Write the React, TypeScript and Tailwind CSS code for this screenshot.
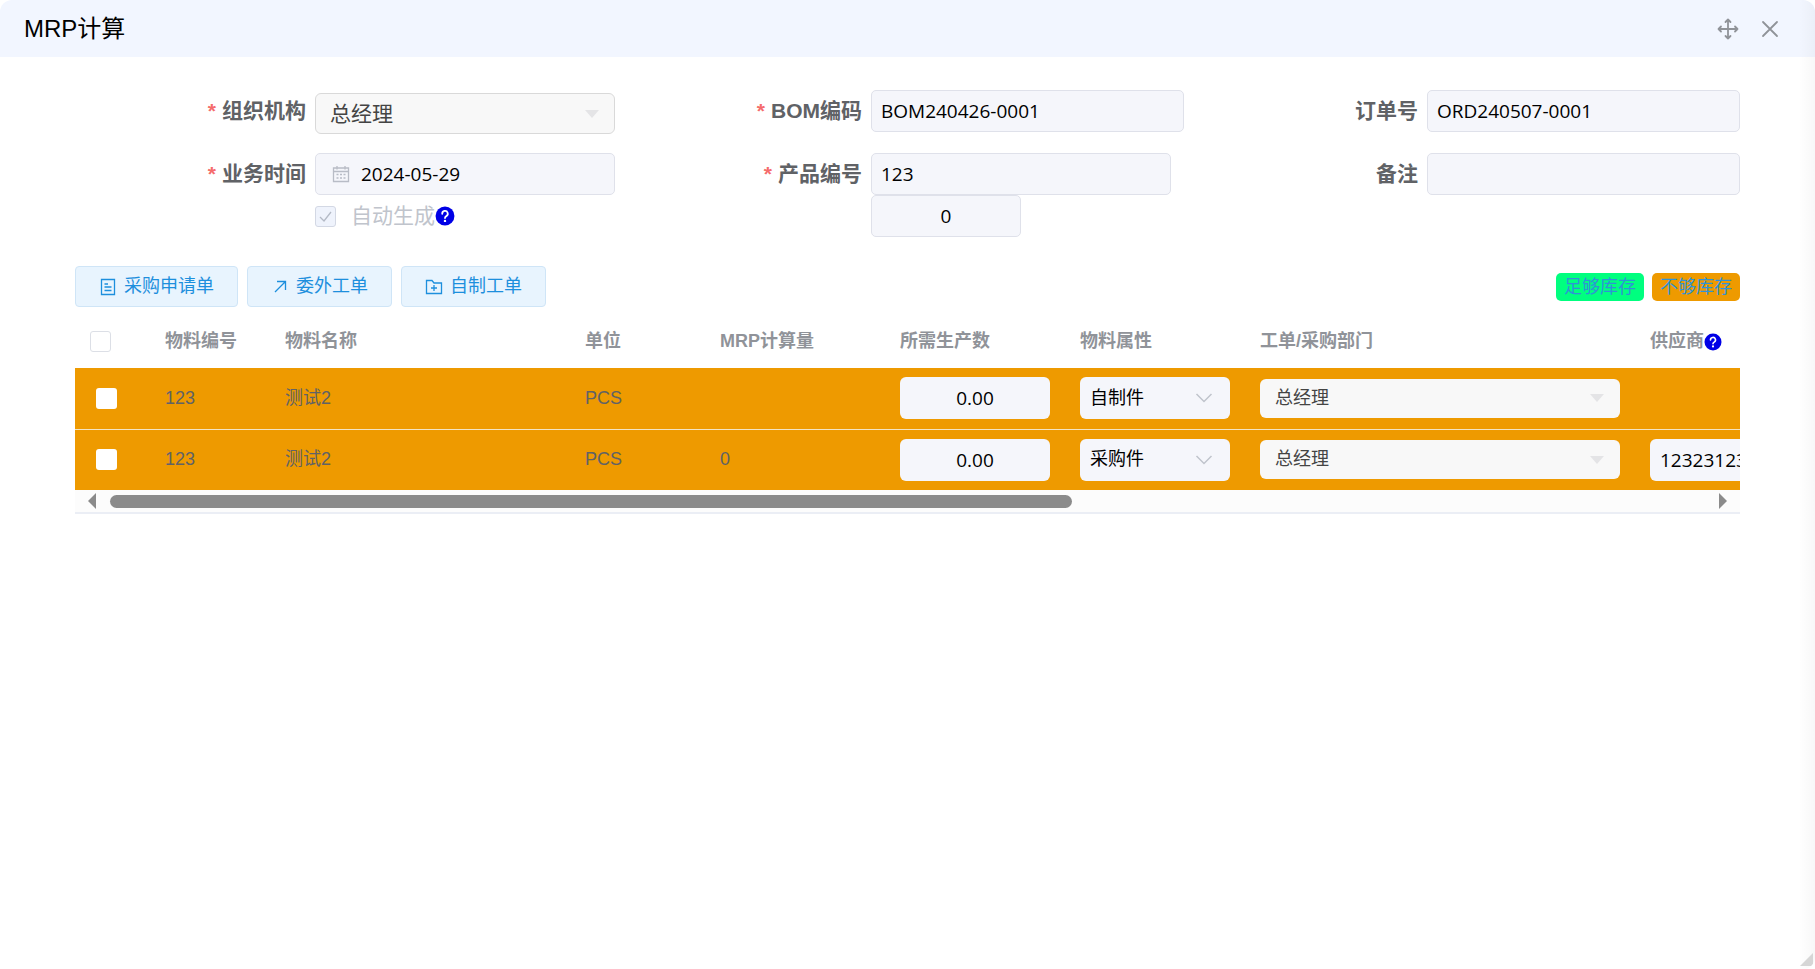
import { useState } from "react"
import type { ReactNode } from "react"

type Row = {
  id: number
  code: string
  name: string
  unit: string
  mrpQty: string
  needQty: string
  kind: string
  dept: string
  supplier: string
}

const rows: Row[] = [
  { id: 1, code: "123", name: "测试2", unit: "PCS", mrpQty: "", needQty: "0.00", kind: "自制件", dept: "总经理", supplier: "" },
  { id: 2, code: "123", name: "测试2", unit: "PCS", mrpQty: "0", needQty: "0.00", kind: "采购件", dept: "总经理", supplier: "12323123" },
]

const inputFont = "font-['Open_Sans','Noto_Sans_CJK_SC',sans-serif]"
const inputBase = `h-[42px] rounded-[5px] border border-[#dfe1ea] bg-[#f5f6fb] px-[9px] text-[19px] text-black outline-none ${inputFont}`
const cellInput = `block h-[42px] w-[150px] rounded-[6px] bg-[#f5f6fb] px-[10px] text-[19px] text-black outline-none ${inputFont}`

function HelpIcon({ className }: { className: string }) {
  return (
    <svg viewBox="0 0 18 18" className={`shrink-0 ${className}`} aria-hidden="true">
      <circle cx="9" cy="9" r="8.5" fill="#0000e6" />
      <path d="M6.500 7a2.500 2.500 0 1 1 3.700 2.100c-.9.5-1.200.9-1.200 1.700" fill="none" stroke="#fff" strokeWidth="1.6" strokeLinecap="round" />
      <circle cx="9" cy="13.4" r="1.1" fill="#fff" />
    </svg>
  )
}

function Caret() {
  return (
    <svg viewBox="0 0 14 8" className="pointer-events-none absolute top-1/2 right-4 h-2 w-[14px] -translate-y-1/2" aria-hidden="true">
      <path d="M0 0h14L7 8z" fill="#e4e4e6" />
    </svg>
  )
}

function Field({ id, label, required, children }: { id: string; label: string; required?: boolean; children: ReactNode }) {
  return (
    <div className="flex">
      <label htmlFor={id} className="flex h-[42px] w-[240px] shrink-0 items-center justify-end gap-[6px] pr-[9px] text-[21px] font-bold text-[#606266]">
        {required && <span className="text-[#f56c6c]">*</span>}
        {label}
      </label>
      <div className="min-w-0 flex-1">{children}</div>
    </div>
  )
}

function ActionButton({ icon, children }: { icon: ReactNode; children: ReactNode }) {
  return (
    <button type="button" className="flex h-[41px] items-center gap-[7px] rounded-[4px] border border-[#cfe5f7] bg-[#e8f4fe] px-[23px] text-[18px] text-[#1d8fdd]">
      {icon}
      {children}
    </button>
  )
}

export default function App() {
  const [checked, setChecked] = useState<number[]>([])

  const toggle = (id: number) => {
    setChecked(checked.includes(id) ? checked.filter((c) => c !== id) : [...checked, id])
  }

  return (
    <div className="relative flex min-h-screen flex-col overflow-hidden rounded-[12px] bg-white font-['Liberation_Sans','Noto_Sans_CJK_SC',sans-serif]">
      {/* Dialog header */}
      <header className="flex h-[57px] items-center justify-between bg-[#f2f6ff] pr-9 pl-6">
        <h1 className="text-[24px] text-black">MRP计算</h1>
        <div className="flex items-center gap-[22px]">
          <button type="button" aria-label="移动" className="text-[#909399]">
            <svg viewBox="0 0 22 22" className="h-[22px] w-[22px]" fill="none" stroke="currentColor" strokeWidth="1.8" strokeLinecap="round" strokeLinejoin="round">
              <path d="M11 1.500v19M1.500 11h19M8.500 4 11 1.500 13.500 4M8.500 18l2.500 2.500 2.500-2.500M4 8.500 1.500 11 4 13.500M18 8.500 20.500 11 18 13.500" />
            </svg>
          </button>
          <button type="button" aria-label="关闭" className="text-[#909399]">
            <svg viewBox="0 0 18 18" className="h-[18px] w-[18px]" fill="none" stroke="currentColor" strokeWidth="1.8" strokeLinecap="round">
              <path d="M2 2l14 14M16 2 2 16" />
            </svg>
          </button>
        </div>
      </header>

      <main className="flex flex-col px-[75px] pt-[33px]">
        {/* Form */}
        <form className="grid grid-cols-3 gap-x-[3px] gap-y-[19px]">
          <Field id="org" label="组织机构" required>
            <div className="relative mt-[3px] w-[300px]">
              <select id="org" disabled className="block h-[41px] w-full appearance-none rounded-[6px] border border-[#d9d9d9] bg-[#f8f8f8] px-[14px] text-[21px] text-[#444] opacity-100">
                <option>总经理</option>
              </select>
              <Caret />
            </div>
          </Field>
          <Field id="bom" label="BOM编码" required>
            <input id="bom" readOnly defaultValue="BOM240426-0001" className={`${inputBase} block w-full`} />
          </Field>
          <Field id="order" label="订单号">
            <input id="order" readOnly defaultValue="ORD240507-0001" className={`${inputBase} block w-full`} />
          </Field>

          <Field id="date" label="业务时间" required>
            <div className="relative w-[300px]">
              <svg viewBox="0 0 18 18" className="absolute top-3 left-[17px] h-[18px] w-[18px]" fill="none" stroke="#b8bcc6" strokeWidth="1.3" aria-hidden="true">
                <path d="M1.500 3h15v13.500h-15zM1.500 6.500h15M5 1v3.500M13 1v3.500" />
                <path d="M4.500 9.500h2M8 9.500h2M11.500 9.500h2M4.500 13h2M8 13h2M11.500 13h2" />
              </svg>
              <input id="date" readOnly defaultValue="2024-05-29" className={`${inputBase} block w-full indent-9`} />
            </div>
            <div className="flex h-[42px] items-center">
              <span className="relative flex">
                <input id="auto" type="checkbox" defaultChecked disabled className="h-[21px] w-[21px] appearance-none rounded-[3px] border border-[#d3d8e4] bg-[#eff3fc]" />
                <svg viewBox="0 0 21 21" className="pointer-events-none absolute inset-0" fill="none" stroke="#b4bac6" strokeWidth="1.3" aria-hidden="true">
                  <path d="M5 11l4 4 7-9" />
                </svg>
              </span>
              <label htmlFor="auto" className="pl-[15px] text-[21px] text-[#c0c4cc]">自动生成</label>
              <HelpIcon className="h-5 w-5" />
            </div>
          </Field>
          <Field id="product" label="产品编号" required>
            <input id="product" readOnly defaultValue="123" className={`${inputBase} block w-[300px]`} />
            <input aria-label="数量" readOnly defaultValue="0" className={`${inputBase} block w-[150px] text-center`} />
          </Field>
          <Field id="remark" label="备注">
            <input id="remark" readOnly className={`${inputBase} block w-full`} />
          </Field>
        </form>

        {/* Toolbar */}
        <div className="mt-[29px] flex items-center justify-between">
          <div className="flex gap-[9px]">
            <ActionButton
              icon={
                <svg viewBox="0 0 18 18" className="h-[18px] w-[18px]" fill="none" stroke="currentColor" strokeWidth="1.3">
                  <path d="M2.500 1.500h13v15h-13zM5.500 6h3.500M5.500 9h7M5.500 12.500h7" />
                </svg>
              }
            >
              采购申请单
            </ActionButton>
            <ActionButton
              icon={
                <svg viewBox="0 0 18 18" className="h-[18px] w-[18px]" fill="none" stroke="currentColor" strokeWidth="1.3">
                  <path d="M4 14 14.500 3.500M6 3.500h8.500V12" />
                </svg>
              }
            >
              委外工单
            </ActionButton>
            <ActionButton
              icon={
                <svg viewBox="0 0 18 18" className="h-[18px] w-[18px]" fill="none" stroke="currentColor" strokeWidth="1.3">
                  <path d="M1.500 2.500h5.500l2 2.500h7.500v10.500h-15zM9 7v6M6 10h6" />
                </svg>
              }
            >
              自制工单
            </ActionButton>
          </div>
          <div className="flex gap-2 text-[18px] leading-[28px] text-[#2f93d6]">
            <span className="rounded-[5px] bg-[#00ff7f] px-2">足够库存</span>
            <span className="rounded-[5px] bg-[#ee9a00] px-2">不够库存</span>
          </div>
        </div>

        {/* Materials */}
        <div className="overflow-hidden">
          <table className="w-[2775px] table-fixed border-collapse text-left text-[18px]">
            <colgroup>
              <col className="w-[75px]" />
              <col className="w-[120px]" />
              <col className="w-[300px]" />
              <col className="w-[135px]" />
              <col className="w-[180px]" />
              <col className="w-[180px]" />
              <col className="w-[180px]" />
              <col className="w-[390px]" />
              <col />
            </colgroup>
            <thead>
              <tr className="h-[61px] text-[#909399] [&>th]:px-[15px] [&>th]:pt-2">
                <th>
                  <input
                    type="checkbox"
                    aria-label="全选"
                    checked={checked.length === rows.length}
                    onChange={() => setChecked(checked.length === rows.length ? [] : rows.map((r) => r.id))}
                    className="block h-[21px] w-[21px] appearance-none rounded-[3px] border border-[#dcdfe6] bg-white checked:bg-[#409eff]"
                  />
                </th>
                <th>物料编号</th>
                <th>物料名称</th>
                <th>单位</th>
                <th>MRP计算量</th>
                <th>所需生产数</th>
                <th>物料属性</th>
                <th>工单/采购部门</th>
                <th>
                  <span className="flex items-center">
                    供应商
                    <HelpIcon className="h-[18px] w-[18px]" />
                  </span>
                </th>
              </tr>
            </thead>
            <tbody>
              {rows.map((row) => (
                <tr key={row.id} className="h-[61px] border-b border-[#f3e3c2] bg-[#ee9a00] text-[#606266] last:border-b-0 [&>td]:px-[15px]">
                  <td>
                    <input
                      type="checkbox"
                      aria-label={`选择 ${row.kind}`}
                      checked={checked.includes(row.id)}
                      onChange={() => toggle(row.id)}
                      className="mx-[6px] block h-[21px] w-[21px] appearance-none rounded-[3px] bg-white checked:bg-[#409eff]"
                    />
                  </td>
                  <td>{row.code}</td>
                  <td>{row.name}</td>
                  <td>{row.unit}</td>
                  <td>{row.mrpQty}</td>
                  <td>
                    <input aria-label="所需生产数" readOnly defaultValue={row.needQty} className={`${cellInput} text-center`} />
                  </td>
                  <td>
                    <div className="relative w-[150px]">
                      <select aria-label="物料属性" defaultValue={row.kind} className="block h-[42px] w-full appearance-none rounded-[6px] bg-[#f5f6fb] px-[10px] text-[18px] text-black">
                        <option>自制件</option>
                        <option>采购件</option>
                      </select>
                      <svg viewBox="0 0 18 18" className="pointer-events-none absolute top-3 right-[17px] h-[18px] w-[18px]" fill="none" stroke="#c0c4cc" strokeWidth="1.5" aria-hidden="true">
                        <path d="M1.500 5 9 12.500 16.500 5" />
                      </svg>
                    </div>
                  </td>
                  <td>
                    <div className="relative w-[360px]">
                      <select aria-label="工单/采购部门" disabled className="block h-[39px] w-full appearance-none rounded-[6px] bg-[#f8f8f8] px-[15px] text-[18px] text-[#444] opacity-100">
                        <option>{row.dept}</option>
                      </select>
                      <Caret />
                    </div>
                  </td>
                  <td>
                    {row.supplier && <input aria-label="供应商" readOnly defaultValue={row.supplier} className={cellInput} />}
                  </td>
                </tr>
              ))}
            </tbody>
          </table>
        </div>

        {/* Horizontal scrollbar */}
        <div className="flex h-6 items-center border-b-2 border-[#ebeef5] bg-[#fcfcfc] px-[13px]" aria-hidden="true">
          <svg viewBox="0 0 8 16" className="h-4 w-2">
            <path d="M8 0v16L0 8z" fill="#8b8b8b" />
          </svg>
          <div className="mr-[6px] ml-[14px] h-[13px] flex-1">
            <div className="h-full w-3/5 rounded-full bg-[#8b8b8b]" />
          </div>
          <svg viewBox="0 0 8 16" className="h-4 w-2">
            <path d="M0 0v16l8-8z" fill="#8b8b8b" />
          </svg>
        </div>
      </main>

      {/* Right edge shade and resize corner */}
      <div className="pointer-events-none absolute inset-y-0 right-0 w-4 bg-linear-to-r from-transparent to-black/3" />
      <svg viewBox="0 0 16 16" className="absolute right-0 bottom-0 h-4 w-4" aria-hidden="true">
        <path d="M14 0v13H1z" fill="#d6d6d6" />
      </svg>
    </div>
  )
}
